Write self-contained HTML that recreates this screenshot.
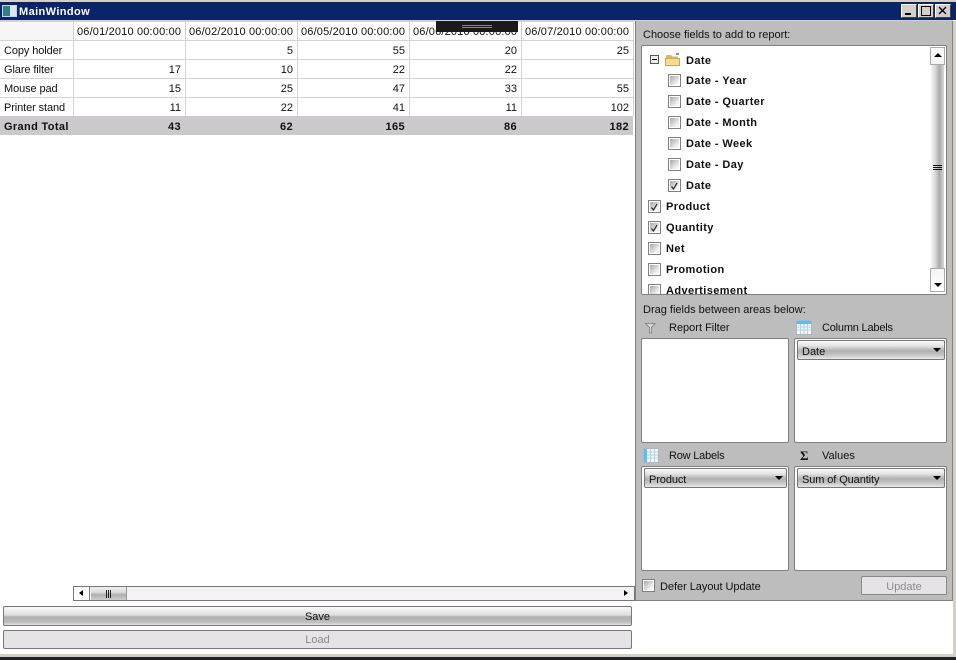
<!DOCTYPE html>
<html><head><meta charset="utf-8"><title>MainWindow</title>
<style>
html,body{margin:0;padding:0;background:#fff}
#w{position:relative;width:956px;height:660px;overflow:hidden;background:#fff;font-family:"Liberation Sans",sans-serif;font-size:11px;color:#111}
#w div,#w span.t{position:absolute;box-sizing:border-box}
.t{white-space:nowrap;line-height:14px;letter-spacing:0;margin-top:1px}
.d{letter-spacing:.17px}
.l{letter-spacing:-.1px}
.n{letter-spacing:-.2px}
.b{font-weight:bold;letter-spacing:.4px}
.r{text-align:right}
.hl{background:#d3d3d3;height:1px}
.vl{background:#d3d3d3;width:1px}
.cb{width:13px;height:13px;border:1px solid #808080;background:#fff}
.cb:after{content:"";position:absolute;left:1px;top:1px;width:9px;height:9px;background:linear-gradient(135deg,#a8a8a8,#f6f6f6 80%)}
.box{background:#fff;border:1px solid #808080;border-radius:2px}
.combo{height:20px;border:1px solid #777;border-radius:2px;background:linear-gradient(#fafafa 0,#e6e6e6 25%,#b0b0b0 55%,#c8c8c8 80%,#e8e8e8 100%)}
.arr{width:0;height:0;border-left:4px solid transparent;border-right:4px solid transparent;border-top:4px solid #000}
</style></head><body>
<div id="w">
<!-- window frame -->
<div style="left:0;top:0;width:956px;height:2px;background:#d4d0c8"></div>
<div style="left:0;top:2px;width:956px;height:18px;background:#0a246a"></div>
<div style="left:2px;top:5px;width:15px;height:12px;background:linear-gradient(90deg,#2f7f86 0 55%,#dfe6e6 55%);border:1px solid #c8d4dc"></div>
<span class="t" style="left:19px;top:4px;color:#fff;font-weight:bold;letter-spacing:.4px">MainWindow</span>
<div style="left:901px;top:4px;width:16px;height:14px;background:#d4d0c8;border:1px solid;border-color:#fff #404040 #404040 #fff"></div>
<div style="left:905px;top:13px;width:6px;height:2px;background:#000"></div>
<div style="left:918px;top:4px;width:16px;height:14px;background:#d4d0c8;border:1px solid;border-color:#fff #404040 #404040 #fff"></div>
<div style="left:921px;top:6px;width:10px;height:10px;border:1px solid #000"></div>
<div style="left:935px;top:4px;width:16px;height:14px;background:#d4d0c8;border:1px solid;border-color:#fff #404040 #404040 #fff"></div>
<svg style="position:absolute;left:938px;top:6px" width="10" height="10"><path d="M1 1L8 8M8 1L1 8" stroke="#000" stroke-width="1.4"/></svg>
<div style="left:0;top:20px;width:953px;height:1px;background:#d4d0c8"></div>

<!-- grid -->
<div style="left:0;top:22px;width:73px;height:18px;background:#f6f6f6"></div>
<div class="hl" style="left:0;top:21px;width:634px"></div>
<div class="hl" style="left:0;top:40px;width:634px"></div>
<div class="hl" style="left:0;top:59px;width:634px"></div>
<div class="hl" style="left:0;top:78px;width:634px"></div>
<div class="hl" style="left:0;top:97px;width:634px"></div>
<div class="vl" style="left:73px;top:21px;height:95px"></div>
<div class="vl" style="left:185px;top:21px;height:95px"></div>
<div class="vl" style="left:297px;top:21px;height:95px"></div>
<div class="vl" style="left:409px;top:21px;height:95px"></div>
<div class="vl" style="left:521px;top:21px;height:95px"></div>
<div class="vl" style="left:633px;top:21px;height:95px"></div>
<div style="left:0;top:116px;width:633px;height:19px;background:#cbc9cb"></div>

<span class="t d" style="left:77px;top:24px">06/01/2010 00:00:00</span>
<span class="t d" style="left:189px;top:24px">06/02/2010 00:00:00</span>
<span class="t d" style="left:301px;top:24px">06/05/2010 00:00:00</span>
<span class="t d" style="left:413px;top:24px">06/06/2010 00:00:00</span>
<span class="t d" style="left:525px;top:24px">06/07/2010 00:00:00</span>

<span class="t l" style="left:4px;top:43px">Copy holder</span>
<span class="t l" style="left:4px;top:62px">Glare filter</span>
<span class="t l" style="left:4px;top:81px">Mouse pad</span>
<span class="t l" style="left:4px;top:100px">Printer stand</span>
<span class="t b" style="left:4px;top:119px;letter-spacing:.35px">Grand Total</span>

<span class="t r" style="left:253px;width:40px;top:43px">5</span>
<span class="t r" style="left:365px;width:40px;top:43px">55</span>
<span class="t r" style="left:477px;width:40px;top:43px">20</span>
<span class="t r" style="left:589px;width:40px;top:43px">25</span>
<span class="t r" style="left:141px;width:40px;top:62px">17</span>
<span class="t r" style="left:253px;width:40px;top:62px">10</span>
<span class="t r" style="left:365px;width:40px;top:62px">22</span>
<span class="t r" style="left:477px;width:40px;top:62px">22</span>
<span class="t r" style="left:141px;width:40px;top:81px">15</span>
<span class="t r" style="left:253px;width:40px;top:81px">25</span>
<span class="t r" style="left:365px;width:40px;top:81px">47</span>
<span class="t r" style="left:477px;width:40px;top:81px">33</span>
<span class="t r" style="left:589px;width:40px;top:81px">55</span>
<span class="t r" style="left:141px;width:40px;top:100px">11</span>
<span class="t r" style="left:253px;width:40px;top:100px">22</span>
<span class="t r" style="left:365px;width:40px;top:100px">41</span>
<span class="t r" style="left:477px;width:40px;top:100px">11</span>
<span class="t r" style="left:589px;width:40px;top:100px">102</span>
<span class="t b r" style="left:141px;width:40px;top:119px">43</span>
<span class="t b r" style="left:253px;width:40px;top:119px">62</span>
<span class="t b r" style="left:365px;width:40px;top:119px">165</span>
<span class="t b r" style="left:477px;width:40px;top:119px">86</span>
<span class="t b r" style="left:589px;width:40px;top:119px">182</span>

<!-- dark drag handle -->
<div style="left:436px;top:21px;width:82px;height:11px;background:#1a1a1a"></div>
<div style="left:462px;top:25px;width:30px;height:1px;background:#888"></div>
<div style="left:462px;top:27px;width:30px;height:1px;background:#888"></div>

<!-- horizontal scrollbar -->
<div style="left:73px;top:586px;width:562px;height:15px;background:#f5f2f5;border:1px solid #777"></div>
<div style="left:74px;top:587px;width:16px;height:13px;background:#fff;border-right:1px solid #777"></div>
<div style="left:79px;top:590px;width:0;height:0;border-top:3.5px solid transparent;border-bottom:3.5px solid transparent;border-right:4px solid #000"></div>
<div style="left:91px;top:587px;width:36px;height:13px;background:linear-gradient(#f0f0f0,#dcdcdc 40%,#aeaeae 60%,#cfcfcf);border-right:1px solid #999"></div>
<div style="left:106px;top:590px;width:1px;height:8px;background:#222"></div>
<div style="left:108px;top:590px;width:1px;height:8px;background:#222"></div>
<div style="left:110px;top:590px;width:1px;height:8px;background:#222"></div>
<div style="left:624px;top:590px;width:0;height:0;border-top:3.5px solid transparent;border-bottom:3.5px solid transparent;border-left:4px solid #000"></div>

<!-- buttons -->
<div style="left:3px;top:606px;width:629px;height:20px;border:1px solid #777;border-radius:2px;background:linear-gradient(#fafafa,#dedede 45%,#b0b0b0 55%,#bebebe 85%,#e4e4e4)"></div>
<span class="t" style="left:3px;width:629px;top:609px;text-align:center">Save</span>
<div style="left:3px;top:630px;width:629px;height:19px;border:1px solid #777;border-radius:2px;background:#e6e3e6"></div>
<span class="t" style="left:3px;width:629px;top:632px;text-align:center;color:#8a8a8a">Load</span>

<!-- right panel -->
<div style="left:635px;top:21px;width:318px;height:580px;background:#bdbdbd;border-left:1px solid #808080;border-right:1px solid #808080;border-bottom:1px solid #808080"></div>
<span class="t" style="left:643px;top:27px">Choose fields to add to report:</span>

<div class="box" style="left:641px;top:45px;width:306px;height:250px"></div>
<!-- list scrollbar -->
<div style="left:931px;top:64px;width:13px;height:204px;background:linear-gradient(90deg,#f4f4f4,#dcdcdc 30%,#aaa 65%,#d8d8d8)"></div>
<div style="left:930px;top:47px;width:15px;height:18px;background:linear-gradient(#fff,#f4f4f4);border:1px solid #aaa"></div>
<div style="left:934px;top:53px;width:0;height:0;border-left:4px solid transparent;border-right:4px solid transparent;border-bottom:4px solid #000"></div>
<div style="left:930px;top:268px;width:15px;height:24px;background:linear-gradient(#f4f4f4,#fff);border:1px solid #aaa"></div>
<div style="left:934px;top:283px;width:0;height:0;border-left:4px solid transparent;border-right:4px solid transparent;border-top:4px solid #000"></div>
<div style="left:933px;top:165px;width:9px;height:1px;background:#111"></div>
<div style="left:933px;top:167px;width:9px;height:1px;background:#111"></div>
<div style="left:933px;top:169px;width:9px;height:1px;background:#111"></div>

<!-- tree -->
<div style="left:650px;top:55px;width:9px;height:9px;border:1px solid #555;background:#eee"></div>
<div style="left:652px;top:59px;width:5px;height:1px;background:#000"></div>
<svg style="position:absolute;left:665px;top:52px" width="16" height="14"><path d="M1 3H6L7.500 4.500H13V7H1Z" fill="#dcb868"/><rect x="9" y="1" width="5" height="3" fill="#fff"/><rect x="11" y="1" width="3" height="2" fill="#4aa8e0"/><path d="M.5 13.500V6.500H14.500V13.500Z" fill="#f8dc96" stroke="#d0a550"/></svg>
<span class="t b" style="left:686px;top:53px">Date</span>

<div class="cb" style="left:668px;top:74px"></div><span class="t b" style="left:686px;top:73px">Date - Year</span>
<div class="cb" style="left:668px;top:95px"></div><span class="t b" style="left:686px;top:94px">Date - Quarter</span>
<div class="cb" style="left:668px;top:116px"></div><span class="t b" style="left:686px;top:115px">Date - Month</span>
<div class="cb" style="left:668px;top:137px"></div><span class="t b" style="left:686px;top:136px">Date - Week</span>
<div class="cb" style="left:668px;top:158px"></div><span class="t b" style="left:686px;top:157px">Date - Day</span>
<div class="cb" style="left:668px;top:179px"></div><span class="t b" style="left:686px;top:178px">Date</span>
<svg style="position:absolute;left:670px;top:181px;z-index:2" width="9" height="9"><path d="M1.500 5.500L3.500 8L7 2" fill="none" stroke="#222" stroke-width="1.200"/></svg>
<div class="cb" style="left:648px;top:200px"></div><span class="t b" style="left:666px;top:199px">Product</span>
<svg style="position:absolute;left:650px;top:202px;z-index:2" width="9" height="9"><path d="M1.500 5.500L3.500 8L7 2" fill="none" stroke="#222" stroke-width="1.200"/></svg>
<div class="cb" style="left:648px;top:221px"></div><span class="t b" style="left:666px;top:220px">Quantity</span>
<svg style="position:absolute;left:650px;top:223px;z-index:2" width="9" height="9"><path d="M1.500 5.500L3.500 8L7 2" fill="none" stroke="#222" stroke-width="1.200"/></svg>
<div class="cb" style="left:648px;top:242px"></div><span class="t b" style="left:666px;top:241px">Net</span>
<div class="cb" style="left:648px;top:263px"></div><span class="t b" style="left:666px;top:262px">Promotion</span>
<div style="left:642px;top:283px;width:200px;height:11px;overflow:hidden">
  <div class="cb" style="left:6px;top:1px"></div><span class="t b" style="left:24px;top:0">Advertisement</span>
</div>

<span class="t" style="left:643px;top:302px">Drag fields between areas below:</span>

<!-- area headers -->
<svg style="position:absolute;left:645px;top:323px" width="11" height="11"><path d="M.5 .5H10L6.500 4.500V10H4.500V4.500Z" fill="#d8d8d8" stroke="#8c8c8c"/></svg>
<span class="t" style="left:669px;top:320px">Report Filter</span>
<svg style="position:absolute;left:796px;top:320px" width="16" height="15"><rect x=".5" y=".5" width="15" height="14" fill="#f4f8fc" stroke="#a8b8c8"/><rect x="1" y="1" width="14" height="3" fill="#58c0ee"/><path d="M1 7H15M1 10H15M4.500 4V14M8 4V14M11.500 4V14" stroke="#b8d0e0"/></svg>
<span class="t n" style="left:822px;top:320px">Column Labels</span>

<div class="box" style="left:641px;top:338px;width:148px;height:105px"></div>
<div class="box" style="left:794px;top:338px;width:153px;height:105px"></div>
<div class="combo" style="left:797px;top:340px;width:148px"></div>
<span class="t" style="left:802px;top:344px">Date</span>
<div class="arr" style="left:933px;top:348px"></div>

<svg style="position:absolute;left:643px;top:448px" width="16" height="15"><rect x=".5" y=".5" width="15" height="14" fill="#f4f8fc" stroke="#a8b8c8"/><rect x="1" y="1" width="3" height="13" fill="#58c0ee"/><path d="M4 4H15M4 7H15M4 10H15M7.500 1V14M11.500 1V14" stroke="#b8d0e0"/></svg>
<span class="t n" style="left:669px;top:448px">Row Labels</span>
<span class="t" style="left:800px;top:448px;font-family:'Liberation Serif',serif;font-weight:bold;font-size:13px;letter-spacing:0">Σ</span>
<span class="t" style="left:822px;top:448px">Values</span>

<div class="box" style="left:641px;top:466px;width:148px;height:105px"></div>
<div class="box" style="left:794px;top:466px;width:153px;height:105px"></div>
<div class="combo" style="left:644px;top:468px;width:143px"></div>
<span class="t l" style="left:649px;top:472px">Product</span>
<div class="arr" style="left:775px;top:476px"></div>
<div class="combo" style="left:797px;top:468px;width:148px"></div>
<span class="t l" style="left:802px;top:472px">Sum of Quantity</span>
<div class="arr" style="left:933px;top:476px"></div>

<div class="cb" style="left:642px;top:579px"></div>
<span class="t" style="left:660px;top:579px;letter-spacing:-.04px">Defer Layout Update</span>
<div style="left:861px;top:576px;width:86px;height:19px;border:1px solid #888;border-radius:2px;background:#e6e3e6"></div>
<span class="t" style="left:861px;width:86px;top:579px;text-align:center;color:#8a8a8a">Update</span>

<!-- bottom/right edge -->
<div style="left:953px;top:21px;width:3px;height:634px;background:#d4d0c8"></div>
<div style="left:0;top:654px;width:956px;height:3px;background:#d4d0c8"></div>
<div style="left:0;top:657px;width:956px;height:3px;background:#222"></div>
</div>
</body></html>
